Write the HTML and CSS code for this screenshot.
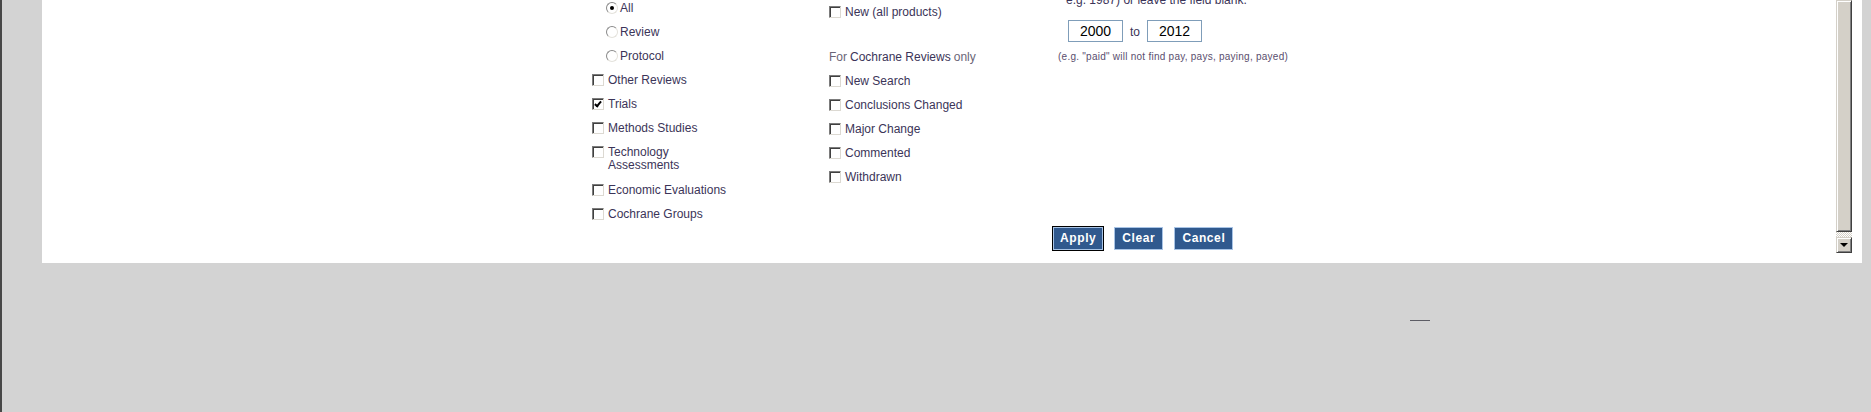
FILE: index.html
```html
<!DOCTYPE html>
<html>
<head>
<meta charset="utf-8">
<link rel="stylesheet" href="styles.css">
</head>
<body>
<div class="panel">
  <div class="content">
    <div class="cols">
      <div class="col col-left">
        <label class="row"><span class="cb"></span><span class="txt">Cochrane Reviews</span></label>
        <label class="row sub"><span class="rb on"></span><span class="txt">All</span></label>
        <label class="row sub"><span class="rb"></span><span class="txt">Review</span></label>
        <label class="row sub"><span class="rb"></span><span class="txt">Protocol</span></label>
        <label class="row"><span class="cb"></span><span class="txt">Other Reviews</span></label>
        <label class="row"><span class="cb on"></span><span class="txt">Trials</span></label>
        <label class="row"><span class="cb"></span><span class="txt">Methods Studies</span></label>
        <label class="row tall"><span class="cb"></span><span class="txt">Technology Assessments</span></label>
        <label class="row"><span class="cb"></span><span class="txt">Economic Evaluations</span></label>
        <label class="row"><span class="cb"></span><span class="txt">Cochrane Groups</span></label>
      </div>
      <div class="col col-mid">
        <label class="row"><span class="cb"></span><span class="txt">New (all products)</span></label>
        <div class="row heading">For <span class="strong">Cochrane Reviews</span> only</div>
        <label class="row"><span class="cb"></span><span class="txt">New Search</span></label>
        <label class="row"><span class="cb"></span><span class="txt">Conclusions Changed</span></label>
        <label class="row"><span class="cb"></span><span class="txt">Major Change</span></label>
        <label class="row"><span class="cb"></span><span class="txt">Commented</span></label>
        <label class="row"><span class="cb"></span><span class="txt">Withdrawn</span></label>
      </div>
      <div class="col col-right">
        <div class="note">e.g. 1987) or leave the field blank.</div>
        <div class="years">
          <span class="year">2000</span>
          <span class="to">to</span>
          <span class="year">2012</span>
        </div>
        <div class="hint">(e.g. "paid" will not find pay, pays, paying, payed)</div>
      </div>
    </div>
    <div class="buttons">
      <button class="btn focused">Apply</button>
      <button class="btn">Clear</button>
      <button class="btn">Cancel</button>
    </div>
  </div>
  <div class="scrollbar">
    <div class="thumb"></div>
    <div class="track"></div>
    <div class="arrow"><span class="tri"></span></div>
  </div>
</div>
<div class="stray"></div>
</body>
</html>
```

FILE: styles.css
```css
html, body {
  margin: 0;
  padding: 0;
}
body {
  background: #d3d3d3;
  border-left: 2px solid #474747;
  height: 412px;
  box-sizing: border-box;
  font-family: "Liberation Sans", Arial, sans-serif;
  font-size: 12px;
  color: #3b3458;
  position: relative;
  overflow: hidden;
}
.panel {
  margin-left: 40px;
  width: 1820px;
  height: 263px;
  background: #fff;
  display: flex;
}
.content {
  flex: 1;
  overflow: hidden;
}
.cols {
  display: flex;
  margin-top: -30px;
  padding-left: 550px;
}
.col-left {
  width: 237px;
  padding-top: 2px;
}
.col-mid {
  width: 229px;
  padding-top: 30px;
}
.col-right {
  padding-top: 24px;
}
.row {
  display: flex;
  align-items: flex-start;
  line-height: 12px;
  padding: 6px 0;
}
.row.sub {
  padding-left: 14px;
}
.row.tall {
  line-height: 13px;
  padding-bottom: 6px;
}
.row .txt {
  max-width: 125px;
}
.col-mid .row .txt {
  max-width: none;
}
.cb {
  flex: none;
  width: 12px;
  height: 12px;
  margin-top: 0;
  margin-right: 4px;
  box-sizing: border-box;
  border-top: 1px solid #7c7c7c;
  border-left: 1px solid #7c7c7c;
  border-right: 1px solid #dcd9d2;
  border-bottom: 1px solid #dcd9d2;
  box-shadow: inset 1px 1px 0 #404040;
  background: #fff;
  position: relative;
}
.cb.on::after {
  content: "";
  position: absolute;
  left: 3px;
  top: 1px;
  width: 2px;
  height: 5px;
  border-right: 2px solid #000;
  border-bottom: 2px solid #000;
  transform: rotate(40deg);
  transform-origin: 50% 50%;
}
.rb {
  flex: none;
  width: 12px;
  height: 12px;
  margin-right: 2px;
  box-sizing: border-box;
  border-radius: 50%;
  border: 1px solid #8a8a8a;
  border-right-color: #e4e2dc;
  border-bottom-color: #e4e2dc;
  background: #fff;
  position: relative;
}
.rb.on::after {
  content: "";
  position: absolute;
  left: 3px;
  top: 3px;
  width: 4px;
  height: 4px;
  border-radius: 50%;
  background: #000;
}
.heading {
  margin-top: 21px;
  color: #6a6577;
}
.heading .strong {
  color: #3b3458;
  margin: 0 3px;
}
.note {
  line-height: 12px;
  padding-left: 8px;
  color: #3b3458;
}
.years {
  display: flex;
  align-items: center;
  margin-top: 14px;
  padding-left: 10px;
}
.year {
  width: 55px;
  height: 22px;
  box-sizing: border-box;
  border: 1px solid #7f9db9;
  font-size: 14px;
  line-height: 20px;
  text-align: center;
  color: #000;
}
.to {
  margin: 2px 7px 0 7px;
  color: #3b3458;
}
.hint {
  margin-top: 9px;
  font-size: 10px;
  line-height: 12px;
  color: #5a4e6e;
  letter-spacing: 0.25px;
}
.buttons {
  display: flex;
  gap: 11px;
  margin-left: 1011px;
  margin-top: 1px;
}
.btn {
  height: 23px;
  box-sizing: border-box;
  background: #30598e;
  border: 1px solid #a8c4e6;
  color: #fff;
  font-family: "Liberation Sans", Arial, sans-serif;
  font-weight: bold;
  font-size: 12px;
  letter-spacing: 0.6px;
  padding: 0 7px;
  margin: 0;
  line-height: 21px;
}
.btn.focused {
  outline: 1px solid #000;
  outline-offset: 0;
  border: 1px solid #a8c4e6;
  padding: 0 6px;
}
.scrollbar {
  width: 16px;
  height: 253px;
  margin-right: 10px;
  display: flex;
  flex-direction: column;
}
.thumb {
  flex: 1;
  background: #d4d0c8;
  border-top: 1px solid #d4d0c8;
  border-left: 1px solid #d4d0c8;
  border-right: 1px solid #404040;
  border-bottom: 1px solid #404040;
  box-shadow: inset 1px 1px 0 #fff, inset -1px -1px 0 #808080;
}
.track {
  height: 5px;
  background: repeating-conic-gradient(#fff 0 25%, #d4d0c8 0 50%) 0 0 / 2px 2px;
}
.arrow {
  height: 16px;
  box-sizing: border-box;
  background: #d4d0c8;
  border-top: 1px solid #d4d0c8;
  border-left: 1px solid #d4d0c8;
  border-right: 1px solid #404040;
  border-bottom: 1px solid #404040;
  box-shadow: inset 1px 1px 0 #fff, inset -1px -1px 0 #808080;
  display: flex;
  align-items: center;
  justify-content: center;
}
.tri {
  width: 0;
  height: 0;
  border-left: 4px solid transparent;
  border-right: 4px solid transparent;
  border-top: 4px solid #000;
}
.stray {
  position: absolute;
  left: 1408px;
  top: 320px;
  width: 20px;
  height: 1px;
  background: #5c5c64;
}
```
